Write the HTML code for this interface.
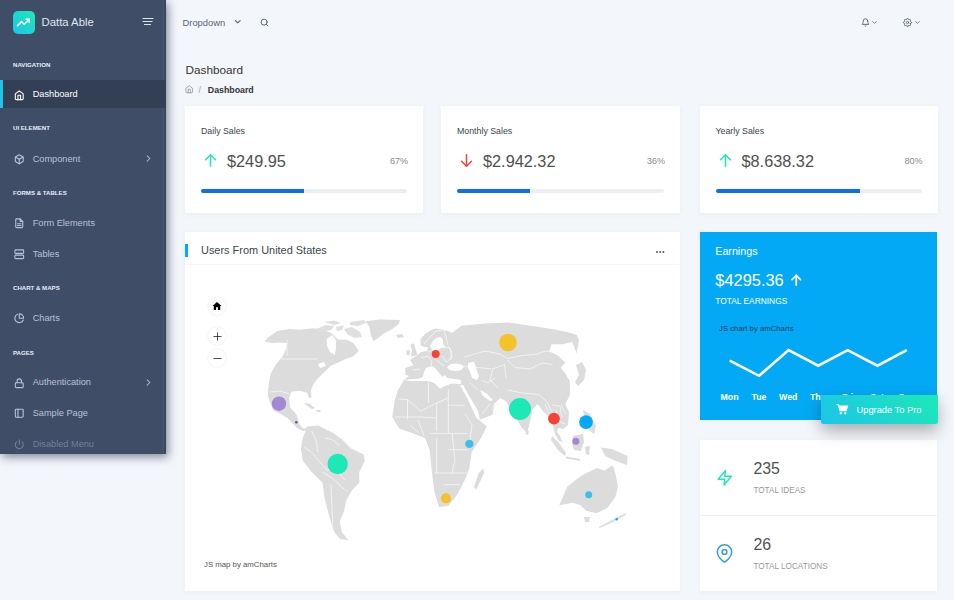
<!DOCTYPE html>
<html><head><meta charset="utf-8">
<style>
*{box-sizing:border-box;margin:0;padding:0}
html,body{width:954px;height:600px;overflow:hidden;background:#f3f6fb;font-family:"Liberation Sans",sans-serif;position:relative}
.t{position:absolute;white-space:nowrap;line-height:1}
.i{position:absolute;overflow:visible}
.card{position:absolute;background:#fff;box-shadow:0 1px 5px rgba(69,90,100,.05)}
.bar{position:absolute;height:4px;border-radius:2px;background:#eceef1}
.bar i{position:absolute;left:0;top:0;height:4px;border-radius:2px 0 0 2px;background:#0e6fe8}
</style></head><body>

<div style="position:absolute;left:0;top:0;width:166px;height:454px;background:#3f4d67;box-shadow:2px 3px 9px rgba(50,62,85,.6)"></div>
<div style="position:absolute;left:162.8px;top:0;width:1px;height:454px;background:rgba(255,255,255,.05)"></div><div style="position:absolute;left:164px;top:0;width:2px;height:454px;background:rgba(0,0,0,.08)"></div>
<div style="position:absolute;left:12.8px;top:10.8px;width:21.9px;height:22.9px;border-radius:5px;background:linear-gradient(-135deg,#1de9b6 0%,#1dc4e9 100%)"></div>
<svg class="i" style="left:17.40px;top:15.90px" width="12.8" height="12.8" viewBox="0 0 24 24" fill="none" stroke="#fff" stroke-width="2.8" stroke-linecap="round" stroke-linejoin="round"><polyline points="23 6 13.5 15.5 8.5 10.5 1 18"/><polyline points="17 6 23 6 23 12"/></svg>
<div class="t" style="left:41.60px;top:17.05px;font-size:11.3px;color:#dfe5f1;">Datta Able</div>
<svg class="i" style="left:142px;top:16px" width="12" height="11" viewBox="0 0 12 11"><path d="M1 2.5H11M1 5.5H10M2.5 8.5H8.5" stroke="#dde3ee" stroke-width="1.2" stroke-linecap="round"/></svg>
<div style="position:absolute;left:0;top:80px;width:166px;height:27.5px;background:#333f54"></div>
<div style="position:absolute;left:0;top:80px;width:3px;height:27.5px;background:#1dc4e9"></div>
<div class="t" style="left:13.00px;top:61.66px;font-size:6.1px;color:#e8edf7;font-weight:bold;">NAVIGATION</div>
<div class="t" style="left:13.00px;top:125.06px;font-size:6.1px;color:#e8edf7;font-weight:bold;">UI ELEMENT</div>
<div class="t" style="left:13.00px;top:190.06px;font-size:6.1px;color:#e8edf7;font-weight:bold;">FORMS &amp; TABLES</div>
<div class="t" style="left:13.00px;top:284.56px;font-size:6.1px;color:#e8edf7;font-weight:bold;">CHART &amp; MAPS</div>
<div class="t" style="left:13.00px;top:349.56px;font-size:6.1px;color:#e8edf7;font-weight:bold;">PAGES</div>
<svg class="i" style="left:13.75px;top:89.65px" width="10.5" height="10.5" viewBox="0 0 24 24" fill="none" stroke="#fff" stroke-width="2.5" stroke-linecap="round" stroke-linejoin="round"><path d="M3 9l9-7 9 7v11a2 2 0 0 1-2 2H5a2 2 0 0 1-2-2z"/><polyline points="9 22 9 12 15 12 15 22"/></svg>
<div class="t" style="left:32.70px;top:90.47px;font-size:9.2px;color:#fff;">Dashboard</div>
<svg class="i" style="left:13.75px;top:153.95px" width="10.5" height="10.5" viewBox="0 0 24 24" fill="none" stroke="#b9c3d5" stroke-width="2.5" stroke-linecap="round" stroke-linejoin="round"><path d="M21 16V8a2 2 0 0 0-1-1.73l-7-4a2 2 0 0 0-2 0l-7 4A2 2 0 0 0 3 8v8a2 2 0 0 0 1 1.73l7 4a2 2 0 0 0 2 0l7-4A2 2 0 0 0 21 16z"/><polyline points="3.27 6.96 12 12.01 20.73 6.96"/><line x1="12" y1="22.08" x2="12" y2="12"/></svg>
<div class="t" style="left:32.70px;top:154.77px;font-size:9.2px;color:#b9c3d5;">Component</div>
<svg class="i" style="left:142.50px;top:153.10px" width="11" height="11" viewBox="0 0 24 24" fill="none" stroke="#b9c3d5" stroke-width="2.3" stroke-linecap="round" stroke-linejoin="round"><polyline points="9 18 15 12 9 6"/></svg>
<svg class="i" style="left:13.75px;top:218.25px" width="10.5" height="10.5" viewBox="0 0 24 24" fill="none" stroke="#b9c3d5" stroke-width="2.5" stroke-linecap="round" stroke-linejoin="round"><path d="M14 2H6a2 2 0 0 0-2 2v16a2 2 0 0 0 2 2h12a2 2 0 0 0 2-2V8z"/><polyline points="14 2 14 8 20 8"/><line x1="16" y1="13" x2="8" y2="13"/><line x1="16" y1="17" x2="8" y2="17"/></svg>
<div class="t" style="left:32.70px;top:219.07px;font-size:9.2px;color:#b9c3d5;">Form Elements</div>
<svg class="i" style="left:13.75px;top:249.35px" width="10.5" height="10.5" viewBox="0 0 24 24" fill="none" stroke="#b9c3d5" stroke-width="2.5" stroke-linecap="round" stroke-linejoin="round"><rect x="2" y="2" width="20" height="8" rx="2" ry="2"/><rect x="2" y="14" width="20" height="8" rx="2" ry="2"/></svg>
<div class="t" style="left:32.70px;top:250.17px;font-size:9.2px;color:#b9c3d5;">Tables</div>
<svg class="i" style="left:13.75px;top:313.45px" width="10.5" height="10.5" viewBox="0 0 24 24" fill="none" stroke="#b9c3d5" stroke-width="2.5" stroke-linecap="round" stroke-linejoin="round"><path d="M21.21 15.89A10 10 0 1 1 8 2.83"/><path d="M22 12A10 10 0 0 0 12 2v10z"/></svg>
<div class="t" style="left:32.70px;top:314.27px;font-size:9.2px;color:#b9c3d5;">Charts</div>
<svg class="i" style="left:13.75px;top:377.55px" width="10.5" height="10.5" viewBox="0 0 24 24" fill="none" stroke="#b9c3d5" stroke-width="2.5" stroke-linecap="round" stroke-linejoin="round"><rect x="3" y="11" width="18" height="11" rx="2" ry="2"/><path d="M7 11V7a5 5 0 0 1 10 0v4"/></svg>
<div class="t" style="left:32.70px;top:378.37px;font-size:9.2px;color:#b9c3d5;">Authentication</div>
<svg class="i" style="left:142.50px;top:376.70px" width="11" height="11" viewBox="0 0 24 24" fill="none" stroke="#b9c3d5" stroke-width="2.3" stroke-linecap="round" stroke-linejoin="round"><polyline points="9 18 15 12 9 6"/></svg>
<svg class="i" style="left:13.75px;top:408.35px" width="10.5" height="10.5" viewBox="0 0 24 24" fill="none" stroke="#b9c3d5" stroke-width="2.5" stroke-linecap="round" stroke-linejoin="round"><rect x="3" y="3" width="18" height="18" rx="2" ry="2"/><line x1="9" y1="3" x2="9" y2="21"/></svg>
<div class="t" style="left:32.70px;top:409.17px;font-size:9.2px;color:#b9c3d5;">Sample Page</div>
<svg class="i" style="left:13.75px;top:438.75px" width="10.5" height="10.5" viewBox="0 0 24 24" fill="none" stroke="rgba(169,183,208,.5)" stroke-width="2.5" stroke-linecap="round" stroke-linejoin="round"><path d="M18.36 6.64a9 9 0 1 1-12.73 0"/><line x1="12" y1="2" x2="12" y2="12"/></svg>
<div class="t" style="left:32.70px;top:439.57px;font-size:9.2px;color:rgba(169,183,208,.5);">Disabled Menu</div>
<div class="t" style="left:182.50px;top:18.07px;font-size:9.4px;color:#5b6472;">Dropdown</div>
<svg class="i" style="left:233.25px;top:17.45px" width="9.5" height="9.5" viewBox="0 0 24 24" fill="none" stroke="#5b6472" stroke-width="2.8" stroke-linecap="round" stroke-linejoin="round"><polyline points="6 9 12 15 18 9"/></svg>
<svg class="i" style="left:259.80px;top:17.50px" width="9" height="9" viewBox="0 0 24 24" fill="none" stroke="#5b6472" stroke-width="2.6" stroke-linecap="round" stroke-linejoin="round"><circle cx="11" cy="11" r="8"/><line x1="21" y1="21" x2="16.65" y2="16.65"/></svg>
<svg class="i" style="left:860.50px;top:17.50px" width="9" height="9" viewBox="0 0 24 24" fill="none" stroke="#5b6472" stroke-width="2.4" stroke-linecap="round" stroke-linejoin="round"><path d="M18 8A6 6 0 0 0 6 8c0 7-3 9-3 9h18s-3-2-3-9"/><path d="M13.73 21a2 2 0 0 1-3.46 0"/></svg>
<svg class="i" style="left:871.00px;top:18.50px" width="7" height="7" viewBox="0 0 24 24" fill="none" stroke="#5b6472" stroke-width="2.8" stroke-linecap="round" stroke-linejoin="round"><polyline points="6 9 12 15 18 9"/></svg>
<svg class="i" style="left:903.00px;top:17.50px" width="9" height="9" viewBox="0 0 24 24" fill="none" stroke="#5b6472" stroke-width="2.4" stroke-linecap="round" stroke-linejoin="round"><circle cx="12" cy="12" r="3"/><path d="M19.4 15a1.65 1.65 0 0 0 .33 1.82l.06.06a2 2 0 0 1 0 2.83 2 2 0 0 1-2.83 0l-.06-.06a1.65 1.65 0 0 0-1.82-.33 1.65 1.65 0 0 0-1 1.51V21a2 2 0 0 1-2 2 2 2 0 0 1-2-2v-.09A1.65 1.65 0 0 0 9 19.4a1.65 1.65 0 0 0-1.82.33l-.06.06a2 2 0 0 1-2.83 0 2 2 0 0 1 0-2.83l.06-.06a1.65 1.65 0 0 0 .33-1.82 1.65 1.65 0 0 0-1.51-1H3a2 2 0 0 1-2-2 2 2 0 0 1 2-2h.09A1.65 1.65 0 0 0 4.6 9a1.65 1.65 0 0 0-.33-1.82l-.06-.06a2 2 0 0 1 0-2.83 2 2 0 0 1 2.83 0l.06.06a1.65 1.65 0 0 0 1.82.33H9a1.65 1.65 0 0 0 1-1.51V3a2 2 0 0 1 2-2 2 2 0 0 1 2 2v.09a1.65 1.65 0 0 0 1 1.51 1.65 1.65 0 0 0 1.82-.33l.06-.06a2 2 0 0 1 2.83 0 2 2 0 0 1 0 2.83l-.06.06a1.65 1.65 0 0 0-.33 1.82V9a1.65 1.65 0 0 0 1.51 1H21a2 2 0 0 1 2 2 2 2 0 0 1-2 2h-.09a1.65 1.65 0 0 0-1.51 1z"/></svg>
<svg class="i" style="left:913.80px;top:18.50px" width="7" height="7" viewBox="0 0 24 24" fill="none" stroke="#5b6472" stroke-width="2.8" stroke-linecap="round" stroke-linejoin="round"><polyline points="6 9 12 15 18 9"/></svg>
<div class="t" style="left:185.50px;top:64.19px;font-size:11.75px;color:#333;">Dashboard</div>
<svg class="i" style="left:185.25px;top:85.25px" width="8.5" height="8.5" viewBox="0 0 24 24" fill="none" stroke="#888" stroke-width="2" stroke-linecap="round" stroke-linejoin="round"><path d="M3 9l9-7 9 7v11a2 2 0 0 1-2 2H5a2 2 0 0 1-2-2z"/><polyline points="9 22 9 12 15 12 15 22"/></svg>
<div class="t" style="left:198.60px;top:85.61px;font-size:8.8px;color:#999;">/</div>
<div class="t" style="left:207.80px;top:85.61px;font-size:8.8px;color:#333;font-weight:bold;">Dashboard</div>
<div class="card" style="left:185px;top:106px;width:238px;height:106.5px"></div>
<div class="t" style="left:201.00px;top:126.76px;font-size:8.8px;color:#37474f;">Daily Sales</div>
<svg class="i" style="left:202.30px;top:152.30px" width="17" height="17" viewBox="0 0 24 24" fill="none" stroke="#1de9b6" stroke-width="2.1" stroke-linecap="round" stroke-linejoin="round"><line x1="12" y1="20" x2="12" y2="4"/><polyline points="5 11 12 4 19 11"/></svg>
<div class="t" style="left:227.00px;top:152.84px;font-size:16.3px;color:#505050;">$249.95</div>
<div class="t" style="right:546.00px;top:157.01px;font-size:9px;color:#8a8a8a;">67%</div>
<div class="bar" style="left:201px;top:189.2px;width:206px"><i style="width:103px"></i></div>
<div class="card" style="left:441px;top:106px;width:239px;height:106.5px"></div>
<div class="t" style="left:457.00px;top:126.76px;font-size:8.8px;color:#37474f;">Monthly Sales</div>
<svg class="i" style="left:458.30px;top:152.30px" width="17" height="17" viewBox="0 0 24 24" fill="none" stroke="#f44236" stroke-width="2.1" stroke-linecap="round" stroke-linejoin="round"><line x1="12" y1="4" x2="12" y2="20"/><polyline points="19 13 12 20 5 13"/></svg>
<div class="t" style="left:483.00px;top:152.84px;font-size:16.3px;color:#505050;">$2.942.32</div>
<div class="t" style="right:289.00px;top:157.01px;font-size:9px;color:#8a8a8a;">36%</div>
<div class="bar" style="left:457px;top:189.2px;width:207px"><i style="width:73px"></i></div>
<div class="card" style="left:699.5px;top:106px;width:238px;height:106.5px"></div>
<div class="t" style="left:715.50px;top:126.76px;font-size:8.8px;color:#37474f;">Yearly Sales</div>
<svg class="i" style="left:716.80px;top:152.30px" width="17" height="17" viewBox="0 0 24 24" fill="none" stroke="#1de9b6" stroke-width="2.1" stroke-linecap="round" stroke-linejoin="round"><line x1="12" y1="20" x2="12" y2="4"/><polyline points="5 11 12 4 19 11"/></svg>
<div class="t" style="left:741.50px;top:152.84px;font-size:16.3px;color:#505050;">$8.638.32</div>
<div class="t" style="right:31.50px;top:157.01px;font-size:9px;color:#8a8a8a;">80%</div>
<div class="bar" style="left:715.5px;top:189.2px;width:206px"><i style="width:144px"></i></div>
<div class="card" style="left:185px;top:232px;width:495px;height:359px"></div>
<div style="position:absolute;left:185px;top:244px;width:3px;height:12.5px;background:#04a9f5"></div>
<div class="t" style="left:201.00px;top:245.42px;font-size:10.95px;color:#37474f;">Users From United States</div>
<div style="position:absolute;left:185px;top:263.5px;width:495px;height:1px;background:#f6f6f6"></div>
<div style="position:absolute;left:656.3px;top:251.2px;width:2px;height:2px;border-radius:50%;background:#555;box-shadow:3.2px 0 0 #555,6.4px 0 0 #555"></div>
<div class="t" style="left:204.00px;top:561.24px;font-size:7.8px;color:#555;">JS map by amCharts</div>
<svg style="position:absolute;left:0;top:0" width="954" height="600" viewBox="0 0 954 600">
<g fill="#dcdcdc">
<!-- North America -->
<path d="M264.5,341.5 L268.4,337.3 L277.3,331 L289.3,329 L300,329.7 L313.3,328.3 L322.7,329.7 L331,333 L338,339.5 L346.7,339.7 L353.3,343 L358.7,351 L353.3,356.3 L345.3,359 L340,361.7 L330.7,365.7 L322.7,373.7 L317.3,379 L313.3,384.3 L311,390 L311.4,397.5 L309,398 L307.2,392.8 L299.8,390.7 L291.4,391.8 L289,398.3 L290.3,407.7 L294.3,411.7 L297,415.7 L299.7,425 L303.7,429 L309,426.3 L307,430.5 L303,431 L297,428 L294.3,425 L287.7,418.3 L281,414.3 L273,410.3 L270,402 L267.7,395.7 L268.7,384.3 L270.7,373.7 L276,364.3 L282.7,356.3 L286,349 L286.7,343 L280,342.5 L272,343 Z"/>
<!-- arctic islands -->
<g fill="#dfdfdf">
<path d="M344,329 L352,327 L360,332 L362,337 L355,338 L348,335 Z"/>
<path d="M350,322 L364,320 L366,323 L358,326 L350,325 Z"/>
<path d="M316,329 L326,325 L334,326 L331,330 L322,332 Z"/>
<path d="M324,322 L334,320.5 L341,323 L334,325 Z"/>
<path d="M336,327 L344,325.5 L342,330 L337,331 Z"/>
</g>
<!-- Greenland -->
<path d="M365.3,321.3 L380,319.5 L400,320 L398.7,324 L392,329.3 L384,333.3 L377.3,338.7 L373.3,341 L370.7,334.7 L369.3,326.7 Z"/>
<!-- Iceland -->
<path d="M396,335 L402,334 L404,337 L398,338 Z"/>
<!-- Cuba / Hispaniola -->
<path d="M304,403 L310,404 L315,408 L312,409 L306,405 Z"/>
<path d="M316,410 L320,410 L321,412 L317,412 Z"/>
<!-- South America -->
<path d="M307.3,426.5 L318.2,425.4 L325,429 L333.3,433 L342,439.5 L350.6,448.2 L363.6,454.6 L364.7,461.1 L359.3,472 L359.3,482.8 L352.8,489.3 L346.3,500.1 L344.1,510.9 L339.8,521.8 L342,532.6 L348.5,540.2 L339.8,539.1 L333.3,530.4 L329,515.3 L324.6,498 L322.5,482.8 L311.7,472 L303,461.1 L300.8,448.2 L303,437.3 Z"/>
<!-- Eurasia + Africa -->
<path d="M405.3,368 L413.3,365.3 L410,360 L416,356 L421.3,352 L427,351 L428,347 L424,347 L420.5,345 L420.5,339 L425,334 L431,330 L436,328.5 L442,329.5 L448,331 L452,333 L461.5,325.8 L484.6,323.5 L507.7,322.4 L530.7,325.8 L553.8,329.3 L569.9,332.8 L576.8,335.1 L579,340 L576.8,353.5 L572.2,342 L563,344.3 L551.5,344.3 L549.2,351.2 L558.4,355.8 L565.3,362.7 L560.7,367.4 L565,373 L569.9,381.2 L569.9,395 L565.3,404.2 L569,412 L568,425 L563,429 L558,428 L557,432 L560,436 L562.5,442 L559,441 L555,434 L553,426 L548,416 L543,411 L537.6,404 L532.7,409.3 L527.3,433.3 L522,428 L506,401.3 L500,398 L494,404 L492.7,414.7 L479,420 L486.9,426.4 L481,438 L471.7,452 L469.4,468.4 L464.7,480 L457.7,494 L448.4,505.8 L439,506.9 L434.4,491.7 L432,473 L429.7,449.7 L425,438 L413.3,433.4 L399.3,428.7 L392.3,417 L394.7,400.7 L398,390 L404,380 L409,376 L405.3,374.7 Z"/>
<!-- UK / Ireland -->
<path d="M410.5,344 L414,343.5 L415.5,349 L417.5,355 L411,356.5 L412,350 Z"/>
<path d="M406.5,350.5 L410,350 L409.5,355 L406.5,355 Z"/>
<!-- Japan -->
<path d="M576,365 L582,362 L586,370 L584,380 L578,386 L575,382 L579,375 Z"/>
<!-- Madagascar -->
<path d="M483.4,468.4 L484,473 L476.4,489.4 L474,487 L478.7,473 Z"/>
<!-- Sri Lanka -->
<path d="M526,430 L529,431 L528,435 L525.5,434 Z"/>
<!-- Sumatra, Java, Borneo, Sulawesi, Philippines, New Guinea -->
<path d="M552,436 L558,442 L566,453 L565,456 L558,450 L551,440 Z"/>
<path d="M566,456.5 L580,459 L580,461 L566,458.5 Z"/>
<path d="M573,436 L583,434 L584,442 L581,451 L574,450 L572,444 Z"/>
<path d="M585,447 L590,446 L589,455 L586,454 Z"/>
<path d="M583,410 L590,414 L596,426 L594,434 L589,430 L585,420 Z"/>
<path d="M601,447.5 L612,449 L627.5,456 L627,465 L616,461 L605,456 Z"/>
<path d="M563,409 L566,409 L565,413 L563,412 Z"/>
<!-- Australia -->
<path d="M559.3,505.3 L567.3,486.7 L580.7,476 L596.7,468 L604.7,470.7 L612.7,465.3 L615.3,473.3 L618,486.7 L615.3,497.3 L607.3,508 L596.7,513.3 L586,510.7 L580.7,505.3 L572.7,502.7 Z"/>
<path d="M584,517 L590,517 L589,522 L585,522 Z"/>
<!-- NZ -->
<path d="M599,527 L612,520 L626,513 L626.5,514.5 L613,522 L599.5,528 Z"/>
</g>
<g fill="none" stroke="#ffffff" stroke-width="0.7" stroke-linejoin="round" opacity="0.9">
<!-- NA -->
<path d="M281,359 L318,359"/>
<path d="M270,392 L280,391 L289,394"/>
<path d="M287,340 L287,356"/>
<!-- SA -->
<path d="M311.7,431 L316,440 L318,452"/>
<path d="M304,447 L311.7,452.5 L326.8,469.8"/>
<path d="M322.5,472 L332,478 L339.8,485"/>
<path d="M331,485 L332,510 L333.3,534.8"/>
<path d="M339,485 L348,492"/>
<path d="M326.8,469.8 L336,470 L345,480"/>
<path d="M325,438 L333,440 L340,446"/>
<!-- Africa -->
<path d="M407.5,399.5 L407.5,419.3"/>
<path d="M398,399 L407.5,399.5 L420.3,411.2 L436.7,403 L448.3,398"/>
<path d="M428.5,382 L428.5,403"/>
<path d="M448.3,389 L448.3,433"/>
<path d="M448.3,405.3 L464.7,405.3"/>
<path d="M436.7,403 L436.7,431"/>
<path d="M395,417 L420,417 L436.7,418"/>
<path d="M429.7,433.4 L467,433.4"/>
<path d="M436.7,438 L436.7,473"/>
<path d="M448.4,449.7 L467,449.7"/>
<path d="M434.4,473 L467,473"/>
<path d="M443.7,484.7 L460,484.7"/>
<path d="M410,425 L418,432 M418,420 L424,436"/>
<path d="M452,433 L455,460 L452,473"/>
<path d="M465,414 L472,425 L470,440"/>
<!-- Europe -->
<path d="M421,358 L428,356 L432,362 L430,369"/>
<path d="M432,357 L442,356 L446,362"/>
<path d="M440,347 L450,348 L452,358 L446,362"/><path d="M424,344 L430,337 L436,331 L444,330"/><path d="M444,330 L446,337 L448,345"/><path d="M448,346 L452,352 L450,360"/>
<path d="M428,352 L433,350 M436,360 L444,366"/>
<path d="M413,370 L420,369"/>
<!-- Asia -->
<path d="M464,357 L485,351 L500,354 L507.5,358.5 L522.5,355.5 L537.5,354 L545,351 L557,352.5 L563,360"/>
<path d="M507.5,360 L515,367.5 L530,369 L542,363 L552.5,364.5"/>
<path d="M462,366 L477.5,367.5 L492.5,369 L504.5,364.5 L506,378"/>
<path d="M493,369 L490,380 L498,388"/>
<path d="M481,380 L488,383 L495,378"/>
<path d="M507.5,390 L522.5,393 L539,394.5"/>
<path d="M539,394.5 L547,402 L552,412"/>
<path d="M552,405 L560,406 L562,418"/><path d="M545,404 L549,414 L553,420"/><path d="M556,410 L560,422 L565,424"/><path d="M561,405 L566,414"/>
<path d="M470,383 L478,390"/>
<path d="M490,404 L482,414"/>
</g>
<g fill="#ffffff">
<!-- Hudson Bay -->
<path d="M326.7,339 L332,335 L336,340 L336,348 L334.7,355 L330,352 L327,346 Z"/>
<!-- Great lakes -->
<path d="M318,364 L324,362 L326,366 L320,368 Z"/>
<!-- Mediterranean -->
<path d="M404,380 L410,379.3 L418,379 L423,377 L424,372 L426,368 L429,367 L433,366 L436,369 L440,374 L442,377 L445,375 L447,378 L455,379 L461,380 L461,384 L452,383.5 L445,386 L440,388.5 L434,383 L428,381 L418,381 L410,381 Z"/>
<ellipse cx="455.5" cy="367.2" rx="8" ry="3.8"/>
<path d="M468,363 L474,361.5 L476,368 L479,376 L477,380 L472,378 L470,372 L468,368 Z"/>
<path d="M460,385 L463,385 L478,411 L480,420 L477,419 L467,398 Z"/>
<path d="M480,390 L486,393 L493,400 L490,401 L483,396 Z"/>
<path d="M430,346 L433,341 L436,338 L441,337 L443,340 L443,344 L446,347 L441,348 L437,351 L433,351 Z"/>
</g>
<!-- bubbles -->
<g>
<circle cx="279" cy="403.7" r="7.2" fill="#a389d4"/>
<circle cx="296.3" cy="422.3" r="1.2" fill="#5b4a8a"/>
<circle cx="337.7" cy="464" r="10.2" fill="#1de9b6"/>
<circle cx="435.7" cy="354.1" r="4" fill="#f44236"/>
<circle cx="508" cy="342.5" r="8.8" fill="#f4c22b"/>
<circle cx="469.4" cy="443.9" r="4.2" fill="#3ebfea"/>
<circle cx="446" cy="498.3" r="5.1" fill="#f4c22b"/>
<circle cx="520" cy="409" r="11" fill="#1de9b6"/>
<circle cx="554" cy="418.7" r="5.9" fill="#f44236"/>
<circle cx="586" cy="422.1" r="6.9" fill="#04a9f5"/>
<circle cx="575.9" cy="441.3" r="3.5" fill="#a389d4"/>
<circle cx="588.7" cy="494.7" r="3.5" fill="#3ebfea"/>
<circle cx="616.7" cy="519.2" r="1.2" fill="#04a9f5"/>
</g>
</svg>
<div style="position:absolute;left:208px;top:297px;width:18px;height:18px;border-radius:50%;background:#fff;box-shadow:0 0 2px rgba(0,0,0,.12)"></div>
<div style="position:absolute;left:208px;top:327px;width:18px;height:18px;border-radius:50%;background:#fff;box-shadow:0 0 2px rgba(0,0,0,.12)"></div>
<svg class="i" style="left:211.50px;top:330.50px" width="11" height="11" viewBox="0 0 24 24" fill="none" stroke="#111" stroke-width="1.6" stroke-linecap="round" stroke-linejoin="round"><line x1="12" y1="4" x2="12" y2="20"/><line x1="4" y1="12" x2="20" y2="12"/></svg>
<div style="position:absolute;left:208px;top:349px;width:18px;height:18px;border-radius:50%;background:#fff;box-shadow:0 0 2px rgba(0,0,0,.12)"></div>
<svg class="i" style="left:211.50px;top:352.50px" width="11" height="11" viewBox="0 0 24 24" fill="none" stroke="#111" stroke-width="1.6" stroke-linecap="round" stroke-linejoin="round"><line x1="4" y1="12" x2="20" y2="12"/></svg>
<svg class="i" style="left:212px;top:301px" width="10" height="10" viewBox="0 0 10 10"><path d="M5 1L9.5 5H8.2V9H6V6.3H4V9H1.8V5H0.5Z" fill="#000"/></svg>
<div class="card" style="left:699.5px;top:232px;width:237.5px;height:188px;background:#04a9f5"></div>
<div class="t" style="left:715.30px;top:245.74px;font-size:10.7px;color:#fff;">Earnings</div>
<div class="t" style="left:715.30px;top:271.80px;font-size:16.4px;color:#fff;">$4295.36</div>
<svg class="i" style="left:789.35px;top:272.75px" width="14.5" height="14.5" viewBox="0 0 24 24" fill="none" stroke="#fff" stroke-width="2.9" stroke-linecap="round" stroke-linejoin="round"><line x1="12" y1="20" x2="12" y2="4"/><polyline points="5 11 12 4 19 11"/></svg>
<div class="t" style="left:715.30px;top:297.45px;font-size:8.4px;color:#fff;">TOTAL EARNINGS</div>
<div class="t" style="left:719.00px;top:325.26px;font-size:7.76px;color:#1a3a5a;">JS chart by amCharts</div>
<svg class="i" style="left:0;top:0" width="954" height="600"><polyline points="729.7,360.7 759.1,375.8 788.6,350.1 818.2,365.7 847.7,350.1 877.4,365.7 906.8,350.1" fill="none" stroke="#fff" stroke-width="2.6" stroke-linejoin="miter"/></svg>
<div class="t" style="left:679.50px;width:100px;text-align:center;top:393.16px;font-size:8.8px;color:#fff;font-weight:bold;">Mon</div>
<div class="t" style="left:709.00px;width:100px;text-align:center;top:393.16px;font-size:8.8px;color:#fff;font-weight:bold;">Tue</div>
<div class="t" style="left:738.30px;width:100px;text-align:center;top:393.16px;font-size:8.8px;color:#fff;font-weight:bold;">Wed</div>
<div class="t" style="left:768.00px;width:100px;text-align:center;top:393.16px;font-size:8.8px;color:#fff;font-weight:bold;">Thu</div>
<div class="t" style="left:797.70px;width:100px;text-align:center;top:393.16px;font-size:8.8px;color:#fff;font-weight:bold;">Fri</div>
<div class="t" style="left:827.00px;width:100px;text-align:center;top:393.16px;font-size:8.8px;color:#fff;font-weight:bold;">Sat</div>
<div class="t" style="left:856.80px;width:100px;text-align:center;top:393.16px;font-size:8.8px;color:#fff;font-weight:bold;">Sun</div>
<div class="card" style="left:699.5px;top:440px;width:237.5px;height:151px"></div>
<div style="position:absolute;left:699.5px;top:515px;width:237.5px;height:1px;background:#f1f1f1"></div>
<svg class="i" style="left:715.75px;top:469.15px" width="17.5" height="17.5" viewBox="0 0 24 24" fill="none" stroke="#1de9b6" stroke-width="2" stroke-linecap="round" stroke-linejoin="round"><polygon points="13 2 3 14 12 14 11 22 21 10 12 10 13 2"/></svg>
<div class="t" style="left:753.40px;top:460.84px;font-size:15.9px;color:#505050;">235</div>
<div class="t" style="left:753.40px;top:486.75px;font-size:8.2px;color:#999;">TOTAL IDEAS</div>
<svg class="i" style="left:714.80px;top:544.10px" width="19" height="19" viewBox="0 0 24 24" fill="none" stroke="#3d9fe0" stroke-width="2" stroke-linecap="round" stroke-linejoin="round"><path d="M21 10c0 7-9 13-9 13s-9-6-9-13a9 9 0 0 1 18 0z"/><circle cx="12" cy="10" r="3"/></svg>
<div class="t" style="left:753.40px;top:537.44px;font-size:15.9px;color:#505050;">26</div>
<div class="t" style="left:753.40px;top:562.55px;font-size:8.2px;color:#999;">TOTAL LOCATIONS</div>
<div style="position:absolute;left:821px;top:395px;width:116.5px;height:29px;border-radius:0 0 2px 2px;background:linear-gradient(-135deg,#1de9b6 0%,#1dc4e9 100%);box-shadow:0 7px 16px rgba(0,0,0,.3)"></div>
<svg class="i" style="left:836px;top:404px" width="12" height="11" viewBox="0 0 24 22"><path d="M1 1h4l3 12h12l3-9H7" fill="none" stroke="#fff" stroke-width="2.5"/><path d="M7 4h16l-3 9H8z" fill="#fff"/><circle cx="9.5" cy="18.5" r="2.3" fill="#fff"/><circle cx="18.5" cy="18.5" r="2.3" fill="#fff"/></svg>
<div class="t" style="left:856.50px;top:405.52px;font-size:9.3px;color:#fff;">Upgrade To Pro</div>
</body></html>
